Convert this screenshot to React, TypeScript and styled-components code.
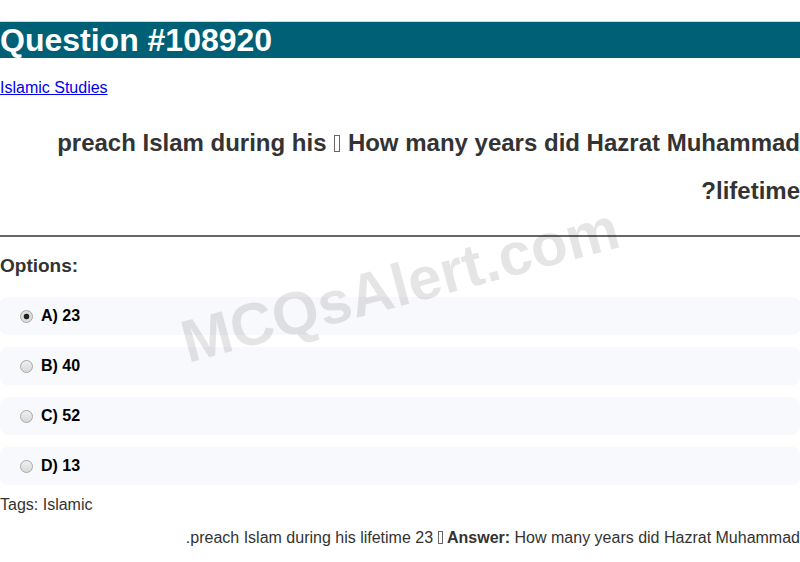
import React from 'react'
import styled, { createGlobalStyle } from 'styled-components'

const GlobalStyle = createGlobalStyle`
  html, body {
    margin: 0;
    padding: 0;
    background: #fff;
  }
  body {
    font-family: "Liberation Sans", Arial, sans-serif;
    color: #333;
  }
`

const options = [
  { key: 'A', value: '23', checked: true },
  { key: 'B', value: '40', checked: false },
  { key: 'C', value: '52', checked: false },
  { key: 'D', value: '13', checked: false },
]

// the reference font has no glyph for the honorific, so it shows as a box
const Honorific = ({ large }: { large?: boolean }) => <_Tofu $large={large}>ﷺ</_Tofu>

export default function App() {
  return (
    <>
      <GlobalStyle />
      <_Page>
        <_Title>Question #108920</_Title>
        <_Category>
          <a href="#">Islamic Studies</a>
        </_Category>
        <_QuestionText dir="rtl">
          How many years did Hazrat Muhammad <Honorific large /> preach Islam during his
          lifetime?
        </_QuestionText>
        <_Rule />
        <_OptionsLabel>Options:</_OptionsLabel>
        <_OptionList>
          {options.map((o) => (
            <_Option key={o.key}>
              <_Radio type="radio" name="opt" defaultChecked={o.checked} />
              <_OptionText>
                {o.key}) {o.value}
              </_OptionText>
            </_Option>
          ))}
        </_OptionList>
        <_Tags>Tags: Islamic</_Tags>
        <_Answer dir="rtl">
          <strong>Answer:</strong> How many years did Hazrat Muhammad <Honorific /> preach
          Islam during his lifetime 23.
        </_Answer>
        <_Watermark>MCQsAlert.com</_Watermark>
      </_Page>
    </>
  )
}

const _Page = styled.div`
  position: relative;
  width: 800px;
  padding-top: 21px;
  overflow: hidden;
`

const _Title = styled.h1`
  margin: 0 0 21px;
  background: #006075;
  color: #fff;
  font-size: 32px;
  line-height: 36px;
  font-weight: bold;
  border-top: 1px solid #c9dde2;
`

const _Category = styled.p`
  margin: 0;
  font-size: 16px;
  line-height: 18px;

  a {
    color: #0000ee;
  }
`

const _QuestionText = styled.p`
  margin: 22px 0 20px;
  font-size: 24px;
  line-height: 48px;
  font-weight: bold;
  color: #333;
  text-align: right;
`

const _Tofu = styled.span<{ $large?: boolean }>`
  font-size: 0;
  line-height: 0;

  &::after {
    content: '';
    display: inline-block;
    width: ${(p) => (p.$large ? 4 : 3)}px;
    height: ${(p) => (p.$large ? 15 : 11)}px;
    margin: 0 ${(p) => (p.$large ? 1 : 0)}px;
    border: 1px solid #666;
    vertical-align: -1px;
  }
`

const _Rule = styled.hr`
  margin: 0;
  border: none;
  border-top: 2px solid #666;
`

const _OptionsLabel = styled.h3`
  margin: 18px 0 20px;
  font-size: 19px;
  line-height: 22px;
  color: #333;
`

const _OptionList = styled.div`
  display: flex;
  flex-direction: column;
  gap: 12px;
`

const _Option = styled.label`
  display: flex;
  align-items: center;
  gap: 8px;
  height: 38px;
  padding: 0 20px;
  background: #f8f9fc;
  border-radius: 8px;
`

const _Radio = styled.input`
  appearance: none;
  margin: 0;
  width: 13px;
  height: 13px;
  border-radius: 50%;
  border: 1px solid #a8a8a8;
  background: linear-gradient(#f0f0f0, #d8d8d8);
  box-sizing: border-box;

  &:checked {
    background: radial-gradient(circle, #222 0 2.5px, #ddd 3.2px);
  }
`

const _OptionText = styled.span`
  font-size: 16px;
  font-weight: bold;
  color: #000;
`

const _Tags = styled.p`
  margin: 11px 0 0;
  font-size: 16px;
  line-height: 18px;
`

const _Answer = styled.p`
  margin: 15px 0 0;
  font-size: 16px;
  line-height: 18px;
  text-align: right;

  strong {
    font-weight: bold;
  }
`

const _Watermark = styled.div`
  position: absolute;
  left: 400px;
  top: 285px;
  transform: translate(-50%, -50%) rotate(-15deg);
  font-size: 60px;
  font-weight: bold;
  color: rgba(0, 0, 0, 0.1);
  white-space: nowrap;
  pointer-events: none;
  user-select: none;
`
